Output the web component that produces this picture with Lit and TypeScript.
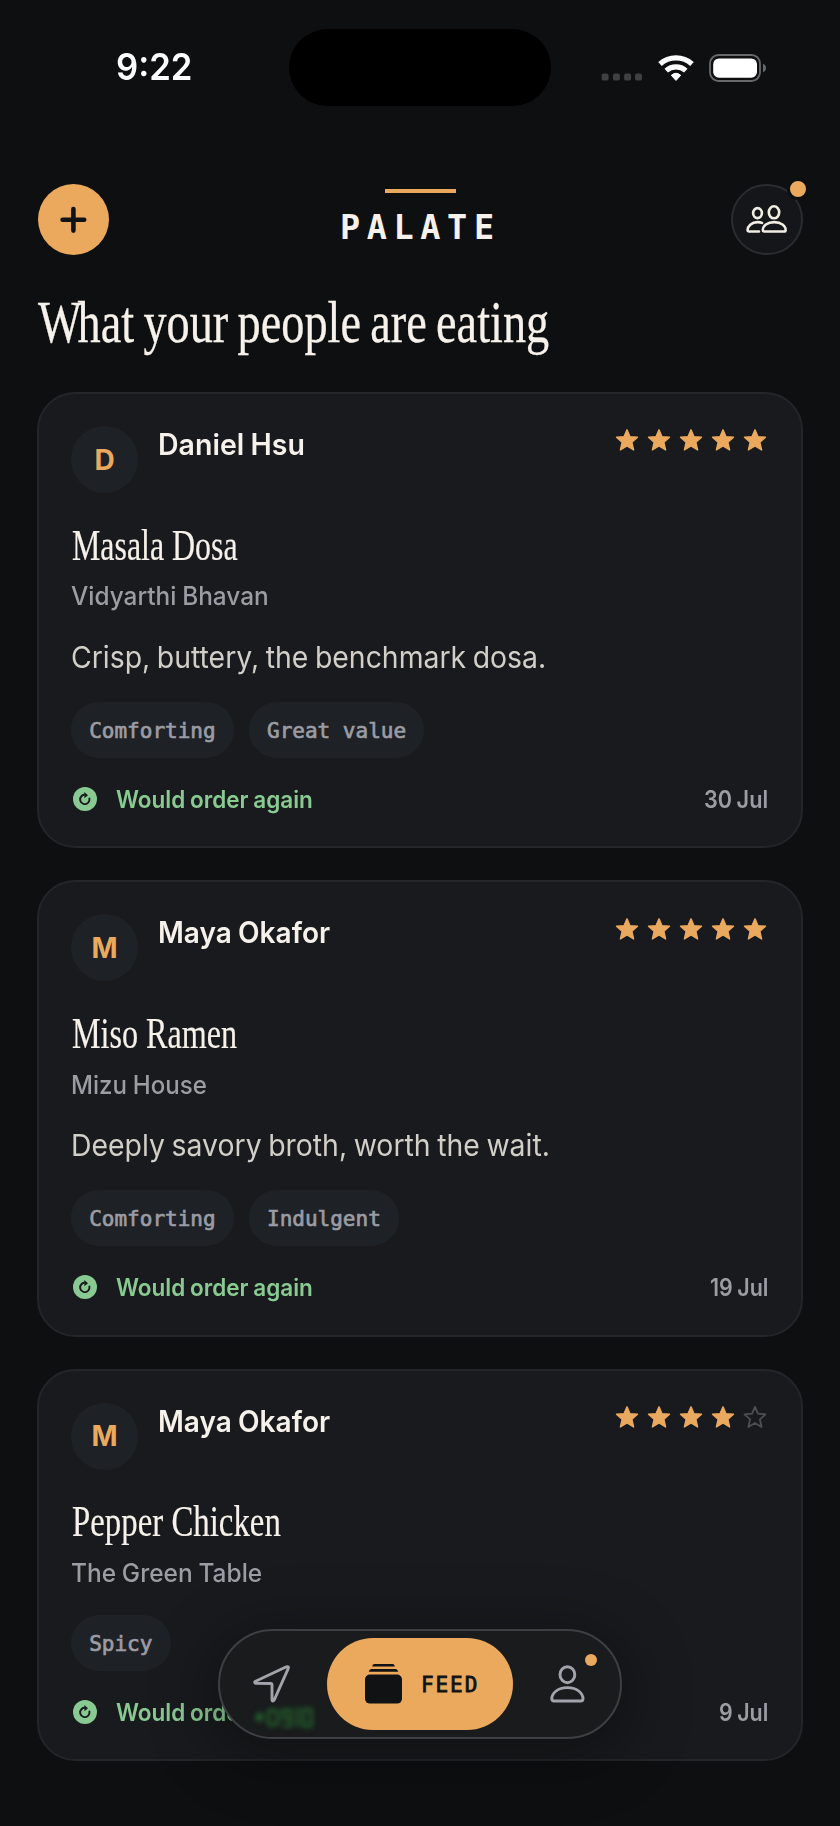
import { LitElement, html, css, svg, nothing } from "lit";
import { customElement, property, query } from "lit/decorators.js";

interface Review {
  name: string;
  nameWidth: number;
  stars: number;
  dish: string;
  dishWidth: number;
  place: string;
  placeWidth: number;
  note?: string;
  noteWidth?: number;
  tags: string[];
  date: string;
  dateWidth: number;
}

const reviews: Review[] = [
  {
    name: "Daniel Hsu", nameWidth: 147, stars: 5,
    dish: "Masala Dosa", dishWidth: 166,
    place: "Vidyarthi Bhavan", placeWidth: 198,
    note: "Crisp, buttery, the benchmark dosa.", noteWidth: 475,
    tags: ["Comforting", "Great value"], date: "30 Jul", dateWidth: 64,
  },
  {
    name: "Maya Okafor", nameWidth: 172, stars: 5,
    dish: "Miso Ramen", dishWidth: 165,
    place: "Mizu House", placeWidth: 136,
    note: "Deeply savory broth, worth the wait.", noteWidth: 479,
    tags: ["Comforting", "Indulgent"], date: "19 Jul", dateWidth: 58,
  },
  {
    name: "Maya Okafor", nameWidth: 172, stars: 4,
    dish: "Pepper Chicken", dishWidth: 209,
    place: "The Green Table", placeWidth: 191,
    tags: ["Spicy"], date: "9 Jul", dateWidth: 49,
  },
];

/** One line of text, condensed or widened to a set measure. */
@customElement("fit-line")
export class FitLine extends LitElement {
  @property({ type: Number }) measure = 0;
  @query(".run") run!: HTMLElement;

  static styles = css`
    :host { display: block; white-space: nowrap; }
    .run { display: inline-block; transform-origin: 0 50%; vertical-align: top; }
  `;

  firstUpdated() {
    const natural = this.run.offsetWidth;
    this.style.width = `${this.measure}px`;
    if (natural > 0) this.run.style.transform = `scaleX(${this.measure / natural})`;
  }

  render() {
    return html`<span class="run"><slot></slot></span>`;
  }
}

const starPath = "M12 1.8 L15 8.7 L22.5 9.3 L16.9 14.3 L18.6 22 L12 18 L5.4 22 L7.1 14.3 L1.5 9.3 L9 8.7 Z";

@customElement("review-card")
export class ReviewCard extends LitElement {
  @property({ attribute: false }) review!: Review;

  static styles = css`
    :host { display: block; }
    .card {
      box-sizing: border-box;
      border: 2px solid #242528;
      border-radius: 38px;
      background: #191a1d;
      padding: 32px;
      font-family: Inter, sans-serif;
      color: #f6f1ea;
    }
    .top { display: flex; align-items: flex-start; height: 67px; }
    .avatar {
      width: 67px; height: 67px; border-radius: 50%;
      background: #1e2226; color: #eba95e;
      display: flex; align-items: center; justify-content: center;
      font-size: 28px; line-height: 36px; font-weight: 700;
    }
    .name { margin: 0.8px 0 0 20px; font-size: 29.5px; line-height: 34px; font-weight: 600; word-spacing: -0.03em; }
    .stars { display: flex; gap: 8px; margin: 2.4px 2px 0 auto; }
    .star { width: 24px; height: 24px; display: block; stroke-linejoin: round; }
    .on { fill: #eba95e; stroke: #eba95e; stroke-width: 1.4; }
    .off { fill: none; stroke: #4d4e52; stroke-width: 1.8; }
    .dish {
      margin: 30.5px 0 0 0.5px; font: 400 44px/44px "Liberation Serif", serif;
      -webkit-text-stroke: 0.2px currentColor;
    }
    .place { margin-top: 13.8px; font-size: 25.5px; line-height: 30px; font-weight: 500; color: #9b9ca4; word-spacing: -0.03em; }
    .note { margin-top: 27.8px; font-size: 30px; line-height: 36px; font-weight: 400; color: #d2cec8; word-spacing: -0.05em; }
    .tags { display: flex; gap: 15px; margin-top: 27px; }
    .tag {
      height: 56px; border-radius: 28px; padding: 0 18.2px; background: #1e2226; color: #9b9ca4;
      font: 400 21px/58px "DejaVu Sans Mono", monospace;
      -webkit-text-stroke: 0.7px currentColor;
      white-space: nowrap;
    }
    .foot { display: flex; align-items: center; height: 31px; margin-top: 25.3px; font-size: 24px; line-height: 32px; word-spacing: -0.04em; }
    .again { width: 24px; height: 24px; margin-left: 2px; display: block; }
    .would { margin: 2px 0 0 19px; color: #88ca91; font-weight: 600; }
    .date { margin: 2px 1px 0 auto; color: #9b9ca4; font-weight: 600; }
  `;

  render() {
    const r = this.review;
    return html`
      <article class="card">
        <div class="top">
          <div class="avatar">${r.name[0]}</div>
          <fit-line class="name" .measure=${r.nameWidth}>${r.name}</fit-line>
          <div class="stars">
            ${[1, 2, 3, 4, 5].map(
              (n) => html`<svg class="star" viewBox="0 0 24 24">
                ${svg`<path class=${n <= r.stars ? "on" : "off"} d=${starPath}></path>`}
              </svg>`
            )}
          </div>
        </div>
        <fit-line class="dish" .measure=${r.dishWidth}>${r.dish}</fit-line>
        <fit-line class="place" .measure=${r.placeWidth}>${r.place}</fit-line>
        ${r.note
          ? html`<fit-line class="note" .measure=${r.noteWidth ?? 0}>${r.note}</fit-line>`
          : nothing}
        <div class="tags">${r.tags.map((t) => html`<span class="tag">${t}</span>`)}</div>
        <div class="foot">
          <svg class="again" viewBox="0 0 24 24">
            <circle cx="12" cy="12" r="12" fill="#88ca91"></circle>
            <path d="M8.6 9 A4.7 4.7 0 1 0 16.4 11.4" fill="none" stroke="#191a1d" stroke-width="1.9" stroke-linecap="round"></path>
            <path d="M8.6 9 Q9.8 7.8 11.6 7.8" fill="none" stroke="#191a1d" stroke-width="1.9"></path>
            <path d="M11.2 5 L15 8.2 L11.4 11.3 Z" fill="#191a1d"></path>
          </svg>
          <fit-line class="would" .measure=${197}>Would order again</fit-line>
          <fit-line class="date" .measure=${r.dateWidth}>${r.date}</fit-line>
        </div>
      </article>
    `;
  }
}

@customElement("app-root")
export class AppRoot extends LitElement {
  static styles = css`
    :host {
      display: block; position: relative; box-sizing: border-box;
      width: 840px; height: 1826px; overflow: hidden;
      background: #0e0f11; color: #f6f1ea;
      font-family: Inter, sans-serif;
    }
    .status {
      display: grid; grid-template-columns: 289px 262px 289px; align-items: center; height: 135px;
    }
    .time { justify-self: start; margin-left: 116px; font-size: 36.5px; line-height: 45px; font-weight: 600; color: #fff; }
    .island { height: 77px; border-radius: 38.5px; background: #000; }
    .signals { display: flex; align-items: center; padding-left: 49px; height: 30px; }
    .dots { width: 42px; height: 28px; display: block; }
    .wifi { width: 36px; height: 28px; margin-left: 16px; display: block; }
    .battery { width: 58px; height: 28px; margin-left: 15px; display: block; }

    .header { display: flex; justify-content: space-between; margin: 48.5px 37.5px 0 37.5px; height: 71.5px; }
    .add { width: 71.5px; height: 71.5px; border-radius: 50%; background: #eba95e; }
    .add svg, .friends svg { display: block; width: 100%; height: 100%; }
    .brand { display: flex; flex-direction: column; align-items: center; padding-top: 5.5px; }
    .rule { width: 71px; height: 3.5px; background: #eba95e; }
    .wordmark {
      display: flex; margin-top: 15px; padding-right: 6px;
      font: 700 33.5px/40px "DejaVu Sans Mono", monospace;
    }
    .wordmark span { width: 26.8px; text-align: center; }
    .friends {
      position: relative; box-sizing: border-box; width: 71.5px; height: 71.5px; border-radius: 50%;
      border: 2px solid #2b2c2f; background: #151619;
    }
    .badge {
      position: absolute; right: -8px; top: -8px; width: 16px; height: 16px;
      border: 3px solid #0e0f11; border-radius: 50%; background: #eba95e;
    }
    .title {
      margin: 36.5px 0 0 38px; font: 400 60px/60px "Liberation Serif", serif; word-spacing: -0.05em;
      -webkit-text-stroke: 0.3px currentColor;
    }
    .lead { letter-spacing: -0.09em; }
    .feed { display: flex; flex-direction: column; gap: 32px; margin: 40.5px 37px 0; }

    .nav {
      position: absolute; left: 218px; top: 1629px; box-sizing: border-box;
      width: 404px; height: 110px; border-radius: 55px; border: 2px solid #3d3f42;
      background: #191b1c; box-shadow: 0 12px 60px 10px rgba(0, 0, 0, 0.34);
      display: flex; align-items: center; padding: 0 7px;
    }
    .tab { flex: 1; height: 92px; display: flex; align-items: center; position: relative; }
    .tab svg { display: block; }
    .send { width: 37px; height: 38px; margin-left: 26px; }
    .me { width: 35px; height: 38px; margin-left: 37px; }
    .active {
      width: 186px; height: 92px; border-radius: 46px; background: #eba95e; color: #111214;
      display: flex; align-items: center; box-sizing: border-box; padding-left: 38px;
    }
    .stack { width: 38px; height: 42px; display: block; }
    .label {
      margin: 2px 0 0 18px; font: 400 21px/30px "DejaVu Sans Mono", monospace; letter-spacing: 1.9px;
      -webkit-text-stroke: 0.8px currentColor;
    }
    .dot { position: absolute; left: 72px; top: 16px; width: 12px; height: 12px; border-radius: 50%; background: #eba95e; }
    .refraction {
      position: absolute; left: 32px; top: 73px; width: 64px; height: 30px; filter: blur(2.6px);
    }
  `;

  render() {
    return html`
      <div class="status">
        <fit-line class="time" .measure=${76}>9:22</fit-line>
        <div class="island"></div>
        <div class="signals">
          <svg class="dots" viewBox="0 0 42 28" fill="#3f4042">
            ${[1.6, 12.9, 24.1, 35].map((x) => svg`<rect x=${x} y="19.6" width="7" height="7" rx="2.2"></rect>`)}
          </svg>
          <svg class="wifi" viewBox="0 0 36 28">
            <g fill="none" stroke="#fff" stroke-width="5.2">
              <path d="M2 10 A24.2 24.2 0 0 1 34 10"></path>
              <path d="M8.2 16.6 A14.8 14.8 0 0 1 27.8 16.6"></path>
            </g>
            <path d="M18 26.4 L13.3 21.3 Q18 17.3 22.7 21.3 Z" fill="#fff" stroke="#fff" stroke-width="1" stroke-linejoin="round"></path>
          </svg>
          <svg class="battery" viewBox="0 0 58 28">
            <rect x="1" y="1" width="50" height="26" rx="8.5" fill="none" stroke="#67686a" stroke-width="1.8"></rect>
            <rect x="4.2" y="4.4" width="43.8" height="19.4" rx="5.8" fill="#fff"></rect>
            <path d="M54 9.8 Q57 11 57 14 T54 18.2 Z" fill="#67686a"></path>
          </svg>
        </div>
      </div>

      <div class="header">
        <div class="add">
          <svg viewBox="0 0 71.5 71.5">
            <path d="M35.4 25 V46.6 M24.6 35.8 H46.2" stroke="#111214" stroke-width="4.6" stroke-linecap="round"></path>
          </svg>
        </div>
        <div class="brand">
          <div class="rule"></div>
          <div class="wordmark">${[..."PALATE"].map((c) => html`<span>${c}</span>`)}</div>
        </div>
        <div class="friends">
          <svg viewBox="0 0 67.5 67.5">
            <g transform="translate(13 19.5)" fill="none" stroke="#f0ede2" stroke-width="2.6" stroke-linejoin="round" stroke-linecap="round">
              <ellipse cx="11.5" cy="7.6" rx="4.4" ry="5"></ellipse>
              <ellipse cx="28" cy="6.8" rx="5.2" ry="6"></ellipse>
              <path d="M16.8 24.4 C16.8 20.5 21.2 16.6 28.2 16.6 S39.6 20.5 39.6 24.4 Q39.6 26 38 26 H18.4 Q16.8 26 16.8 24.4 Z"></path>
              <path d="M13 26 H3.2 Q1.6 26 1.6 24.4 C1.6 20.8 5.4 16.6 11.6 16.6 Q14.2 16.6 16 17.4"></path>
            </g>
          </svg>
          <span class="badge"></span>
        </div>
      </div>

      <fit-line class="title" .measure=${511}><span class="lead">W</span>hat your people are eating</fit-line>

      <div class="feed">
        ${reviews.map((r) => html`<review-card .review=${r}></review-card>`)}
      </div>

      <nav class="nav">
        <svg class="refraction" viewBox="0 0 66 30" fill="none" stroke="#235a2b" stroke-width="3.4" aria-hidden="true">
          <path d="M2 13 L8 7 L13 13 L8 19 Z" fill="#235a2b" stroke="none"></path>
          <rect x="17" y="6" width="9" height="15" rx="2"></rect>
          <path d="M31 22 H40 V6 H32 V14 H40"></path>
          <path d="M47 3 V23"></path>
          <path d="M53 22 V5 H61 V22 Z"></path>
        </svg>
        <div class="tab">
          <svg class="send" viewBox="0 0 37 38">
            <path d="M2.6 16.2 L33.4 1.8 Q36 1 35.2 3.6 L21.2 35 Q19.6 37.4 19 34.8 V19.6 Q19 18.6 18 18.5 L3 18.4 Q.6 17.6 2.6 16.2 Z"
              fill="none" stroke="#a3a4ab" stroke-width="2.9" stroke-linejoin="round"></path>
          </svg>
        </div>
        <div class="active">
          <svg class="stack" viewBox="0 0 38 42" fill="#111214">
            <path d="M9 1 H28 Q29.4 1.4 29.8 3.6 H7.2 Q7.6 1.4 9 1 Z"></path>
            <path d="M6 6 H31 Q32.8 6.4 33.2 8.8 H3.8 Q4.2 6.4 6 6 Z"></path>
            <rect x="0" y="11.6" width="37" height="29" rx="5"></rect>
          </svg>
          <span class="label">FEED</span>
        </div>
        <div class="tab">
          <svg class="me" viewBox="0 0 35 38" fill="none" stroke="#a3a4ab" stroke-width="2.9" stroke-linejoin="round">
            <ellipse cx="17.4" cy="9.7" rx="7.4" ry="8"></ellipse>
            <path d="M1.8 33.8 C1.8 28.6 7.2 22.6 17.4 22.6 S33 28.6 33 33.8 Q33 36 30.8 36 H4 Q1.8 36 1.8 33.8 Z"></path>
          </svg>
          <span class="dot"></span>
        </div>
      </nav>
    `;
  }
}
